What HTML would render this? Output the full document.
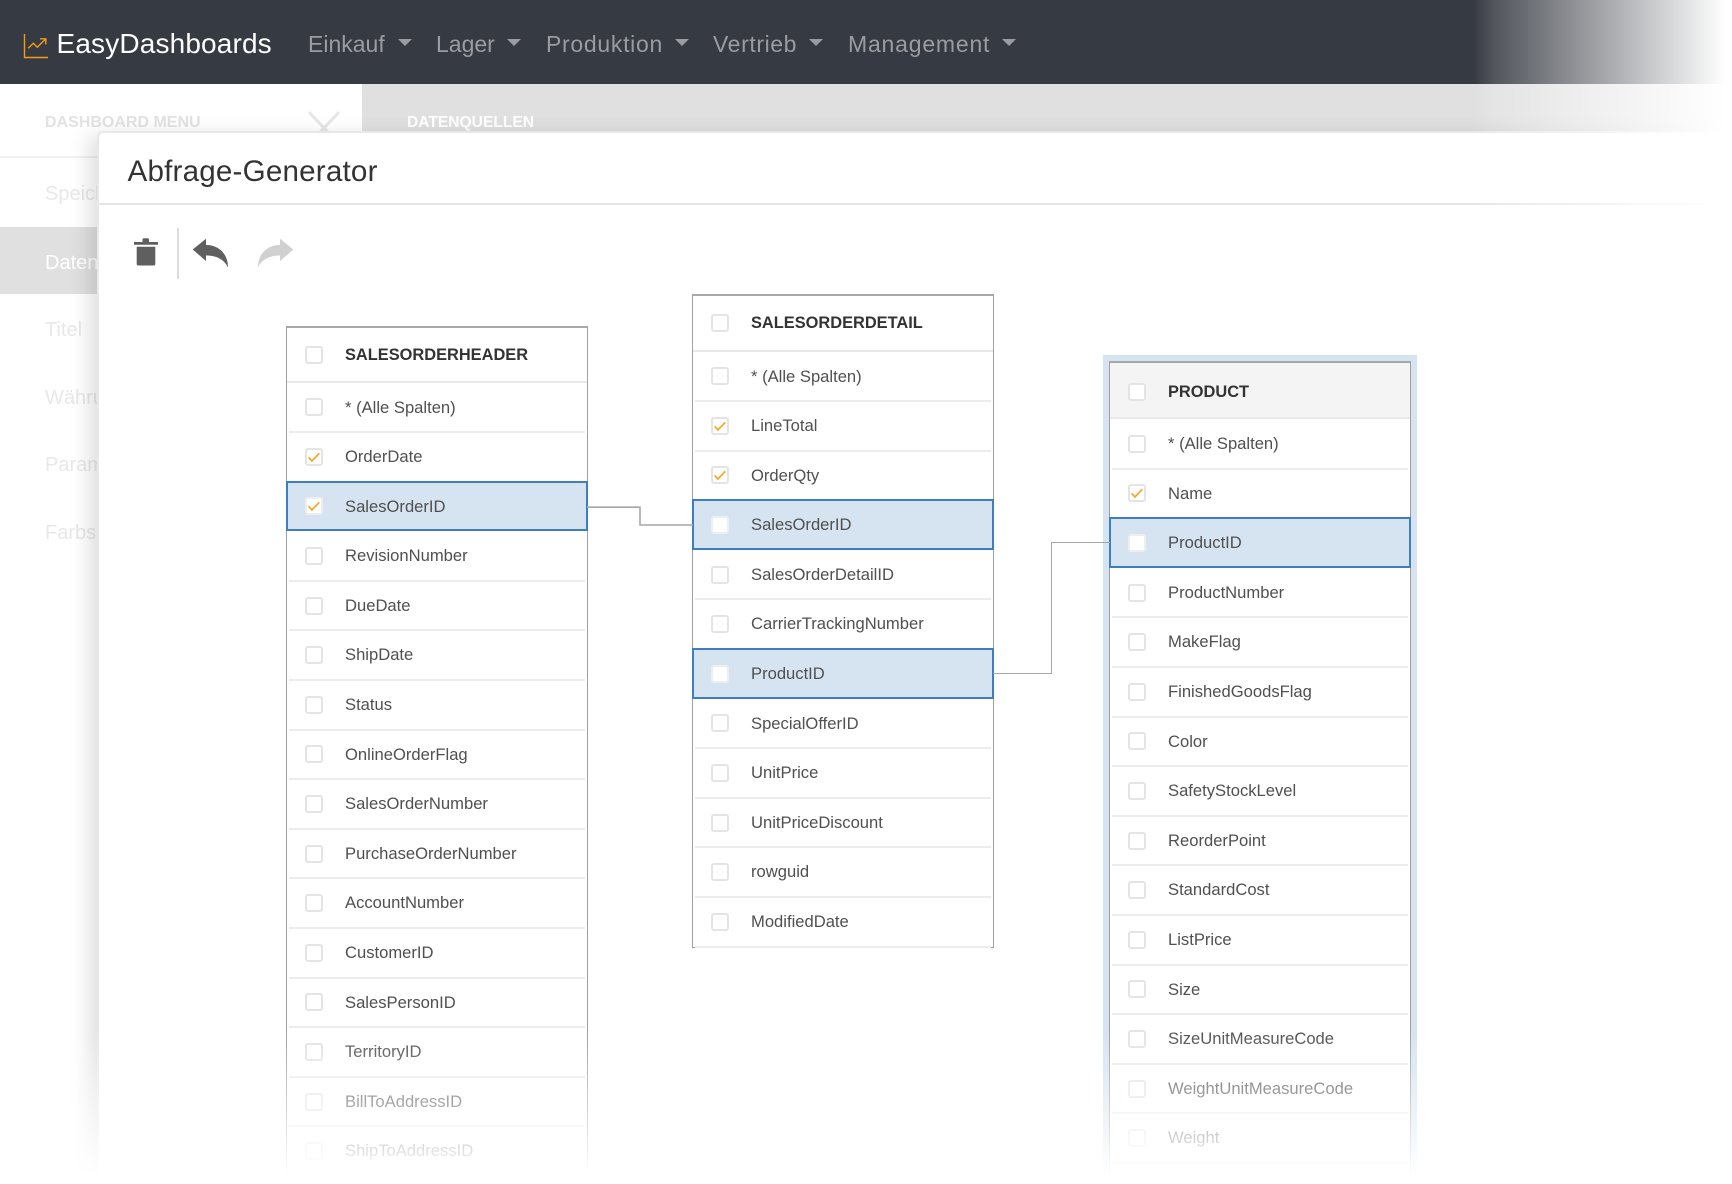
<!DOCTYPE html>
<html lang="de"><head><meta charset="utf-8"><title>EasyDashboards</title>
<style>
*{box-sizing:border-box}
html,body{margin:0;padding:0;background:#fff;width:1732px;height:1184px;overflow:hidden}
body{font-family:"Liberation Sans",sans-serif}
#p{position:absolute;left:0;top:0;width:1732px;height:1184px;overflow:hidden;background:#fff;contain:paint}
.a{position:absolute;white-space:nowrap}
#nav{left:0;top:0;width:1732px;height:84px;background:#363a42}
.n{top:0;line-height:88px;font-size:23px;color:#9a9ca1}
.c{top:39px;width:0;height:0;border-left:7px solid transparent;border-right:7px solid transparent;border-top:7px solid #9a9ca1}
.s{left:45px;font-size:20px;color:#e8e8e8;line-height:24px}
#modal{left:97px;top:131px;width:1635px;height:1053px;background:#fff;border:2px solid #e8e8e8;border-radius:6px 0 0 0;box-shadow:-8px 4px 20px rgba(0,0,0,.13)}
.t{position:absolute;width:302px;background:#fff;border:1px solid #9f9f9f;border-top:2px solid #a8a8a8}
.h{position:absolute;left:0;right:0;top:0}
.h b{position:absolute;left:58px;font-size:16.4px;color:#333;line-height:20px;top:-10px}
.rows{position:absolute;left:0;right:0}
.rows:before{content:"";position:absolute;left:0;right:0;top:-2px;height:2px;background:#e8e8e8}
.r{position:relative;height:49.6px;line-height:49.6px;font-size:16.6px;color:#505050}
.r:after{content:"";position:absolute;left:2px;right:2px;bottom:-1px;height:2px;background:#ececec}
.r span{position:absolute;left:58px;top:0}
.r.x{z-index:2}
.r.x:after{display:none}
.r.x:before{content:"";position:absolute;left:-1px;right:-1px;top:-1px;bottom:0;background:#d6e3f0;border:2px solid #3d7ebd}
.b{position:absolute;left:18px;top:calc(50% - 9px);width:18px;height:18px;background:#fff;border:2px solid #e4e4e4;border-radius:3px;z-index:1}
.r.x .b{border-color:#eceff2}
.b svg{position:absolute;left:-2px;top:-2px;width:18px;height:18px}
#fb{left:0;top:1030px;width:1732px;height:154px;background:linear-gradient(to bottom,rgba(255,255,255,0) 0,#fff 146px);z-index:10}
#fr{left:1474px;top:0;width:258px;height:1184px;background:linear-gradient(to right,rgba(255,255,255,0) 0,rgba(255,255,255,.14) 20px,#fff 251px);z-index:10}
</style></head><body><div id="p">

<div class="a" style="left:362px;top:84px;width:1370px;height:48px;background:#e0e0e0"></div>
<div class="a" style="left:407px;top:113px;font-size:15.6px;font-weight:bold;color:#fff;line-height:20px">DATENQUELLEN</div>
<div class="a" style="left:45px;top:113px;font-size:16px;font-weight:bold;color:#e2e2e2;line-height:20px">DASHBOARD MENU</div>
<svg class="a" style="left:305px;top:108px" width="40" height="23"><path d="M4 4L34 36M34 4L4 36" stroke="#e6e6e6" stroke-width="3" fill="none"/></svg>
<div class="a" style="left:0;top:156px;width:97px;height:2px;background:#f2f2f2"></div>
<div class="a s" style="top:182px;width:97px;overflow:hidden">Speichern</div>
<div class="a" style="left:0;top:227px;width:97px;height:67px;background:#e0e0e0"></div>
<div class="a s" style="top:251px;color:#fff;width:52px;overflow:hidden">Datenquellen</div>
<div class="a s" style="top:318px">Titel</div>
<div class="a s" style="top:386px;width:52px;overflow:hidden">Währung</div>
<div class="a s" style="top:453px;width:52px;overflow:hidden">Parameter</div>
<div class="a s" style="top:521px;width:52px;overflow:hidden">Farbschema</div>

<div class="a" id="nav">
<svg class="a" style="left:23px;top:33px" width="27" height="27" viewBox="0 0 27 27" fill="none" stroke="#f39c12" stroke-width="1.4"><path d="M1.5 1v23.5H25"/><path d="M5.3 15.3L10.3 10.3L14.3 14.3L22.3 6.3"/><path d="M17 5.8H22.8V11.5"/></svg>
<div class="a" style="left:56.5px;top:0;line-height:88px;font-size:28px;letter-spacing:.15px;color:#fff">EasyDashboards</div>
<div class="a n" style="left:308px">Einkauf</div><div class="a c" style="left:398px"></div>
<div class="a n" style="left:436px">Lager</div><div class="a c" style="left:507px"></div>
<div class="a n" style="left:546px;letter-spacing:.7px">Produktion</div><div class="a c" style="left:675px"></div>
<div class="a n" style="left:713px;letter-spacing:.6px">Vertrieb</div><div class="a c" style="left:809px"></div>
<div class="a n" style="left:848px;letter-spacing:.8px">Management</div><div class="a c" style="left:1002px"></div>
</div>

<div class="a" id="modal"></div>
<div class="a" style="left:127.5px;top:153px;font-size:29.6px;letter-spacing:.2px;line-height:38px;color:#333">Abfrage-Generator</div>
<div class="a" style="left:99px;top:203px;width:1633px;height:2px;background:#e6e6e6"></div>

<svg class="a" style="left:130px;top:234px" width="170" height="48" viewBox="130 234 170 48">
<path fill="#5f5f5f" d="M134 242h8.5v-2.2a1.5 1.5 0 0 1 1.5-1.5h3.5a1.5 1.5 0 0 1 1.5 1.5V242h9v2.8h-24zM136.7 246.7h18.6v17.3a1.5 1.5 0 0 1-1.5 1.5h-15.6a1.5 1.5 0 0 1-1.5-1.5z"/>
<path fill="#5f5f5f" d="M192.7 249.5L206 238.8V245C219 245 228 254 228 267.5C224 259 216 255.5 206 255.5V261Z"/>
<path fill="#d0d0d0" d="M293.3 249.5L280 238.8V245C267 245 258 254 258 267.5C262 259 270 255.5 280 255.5V261Z"/>
</svg>
<div class="a" style="left:177px;top:228px;width:2px;height:51px;background:#dcdcdc"></div>

<svg class="a" style="left:580px;top:500px;z-index:3" width="120" height="32"><path d="M7 7.2H60V25H113" fill="none" stroke="#a6a6a6" stroke-width="1.6"/></svg>
<svg class="a" style="left:990px;top:535px;z-index:3" width="125" height="145"><path d="M3 138.5H61.5V7.5H120" fill="none" stroke="#a6a6a6" stroke-width="1"/></svg>

<!-- Table 1 -->
<div class="t" style="left:286px;top:326px;height:858px">
<div class="h" style="top:27px"><div class="b"></div><b>SALESORDERHEADER</b></div>
<div class="rows" style="top:54.5px">
<div class="r"><i class="b"></i><span>* (Alle Spalten)</span></div>
<div class="r"><i class="b"><svg viewBox="0 0 18 18"><path d="M3.7 9.3L6.9 13L14.3 5.3" fill="none" stroke="#f5a623" stroke-width="1.7"/></svg></i><span>OrderDate</span></div>
<div class="r x"><i class="b"><svg viewBox="0 0 18 18"><path d="M3.7 9.3L6.9 13L14.3 5.3" fill="none" stroke="#f5a623" stroke-width="1.7"/></svg></i><span>SalesOrderID</span></div>
<div class="r"><i class="b"></i><span>RevisionNumber</span></div>
<div class="r"><i class="b"></i><span>DueDate</span></div>
<div class="r"><i class="b"></i><span>ShipDate</span></div>
<div class="r"><i class="b"></i><span>Status</span></div>
<div class="r"><i class="b"></i><span>OnlineOrderFlag</span></div>
<div class="r"><i class="b"></i><span>SalesOrderNumber</span></div>
<div class="r"><i class="b"></i><span>PurchaseOrderNumber</span></div>
<div class="r"><i class="b"></i><span>AccountNumber</span></div>
<div class="r"><i class="b"></i><span>CustomerID</span></div>
<div class="r"><i class="b"></i><span>SalesPersonID</span></div>
<div class="r"><i class="b"></i><span>TerritoryID</span></div>
<div class="r"><i class="b"></i><span>BillToAddressID</span></div>
<div class="r"><i class="b"></i><span>ShipToAddressID</span></div>
</div></div>

<!-- Table 2 -->
<div class="t" style="left:692px;top:294px;height:654px">
<div class="h" style="top:26.5px"><div class="b"></div><b>SALESORDERDETAIL</b></div>
<div class="rows" style="top:55.5px">
<div class="r"><i class="b"></i><span>* (Alle Spalten)</span></div>
<div class="r"><i class="b"><svg viewBox="0 0 18 18"><path d="M3.7 9.3L6.9 13L14.3 5.3" fill="none" stroke="#f5a623" stroke-width="1.7"/></svg></i><span>LineTotal</span></div>
<div class="r"><i class="b"><svg viewBox="0 0 18 18"><path d="M3.7 9.3L6.9 13L14.3 5.3" fill="none" stroke="#f5a623" stroke-width="1.7"/></svg></i><span>OrderQty</span></div>
<div class="r x"><i class="b"></i><span>SalesOrderID</span></div>
<div class="r"><i class="b"></i><span>SalesOrderDetailID</span></div>
<div class="r"><i class="b"></i><span>CarrierTrackingNumber</span></div>
<div class="r x"><i class="b"></i><span>ProductID</span></div>
<div class="r"><i class="b"></i><span>SpecialOfferID</span></div>
<div class="r"><i class="b"></i><span>UnitPrice</span></div>
<div class="r"><i class="b"></i><span>UnitPriceDiscount</span></div>
<div class="r"><i class="b"></i><span>rowguid</span></div>
<div class="r"><i class="b"></i><span>ModifiedDate</span></div>
</div></div>

<!-- Table 3 -->
<div class="t" style="left:1109px;top:361px;height:817px;box-shadow:0 0 0 6px #d6e3f0">
<div class="a" style="left:0;right:0;top:0;height:55px;background:#f4f4f4"></div>
<div class="h" style="top:28.5px"><div class="b"></div><b>PRODUCT</b></div>
<div class="rows" style="top:56px">
<div class="r"><i class="b"></i><span>* (Alle Spalten)</span></div>
<div class="r"><i class="b"><svg viewBox="0 0 18 18"><path d="M3.7 9.3L6.9 13L14.3 5.3" fill="none" stroke="#f5a623" stroke-width="1.7"/></svg></i><span>Name</span></div>
<div class="r x"><i class="b"></i><span>ProductID</span></div>
<div class="r"><i class="b"></i><span>ProductNumber</span></div>
<div class="r"><i class="b"></i><span>MakeFlag</span></div>
<div class="r"><i class="b"></i><span>FinishedGoodsFlag</span></div>
<div class="r"><i class="b"></i><span>Color</span></div>
<div class="r"><i class="b"></i><span>SafetyStockLevel</span></div>
<div class="r"><i class="b"></i><span>ReorderPoint</span></div>
<div class="r"><i class="b"></i><span>StandardCost</span></div>
<div class="r"><i class="b"></i><span>ListPrice</span></div>
<div class="r"><i class="b"></i><span>Size</span></div>
<div class="r"><i class="b"></i><span>SizeUnitMeasureCode</span></div>
<div class="r"><i class="b"></i><span>WeightUnitMeasureCode</span></div>
<div class="r"><i class="b"></i><span>Weight</span></div>
</div></div>

<div class="a" id="fb"></div>
<div class="a" id="fr"></div>
</div></body></html>
